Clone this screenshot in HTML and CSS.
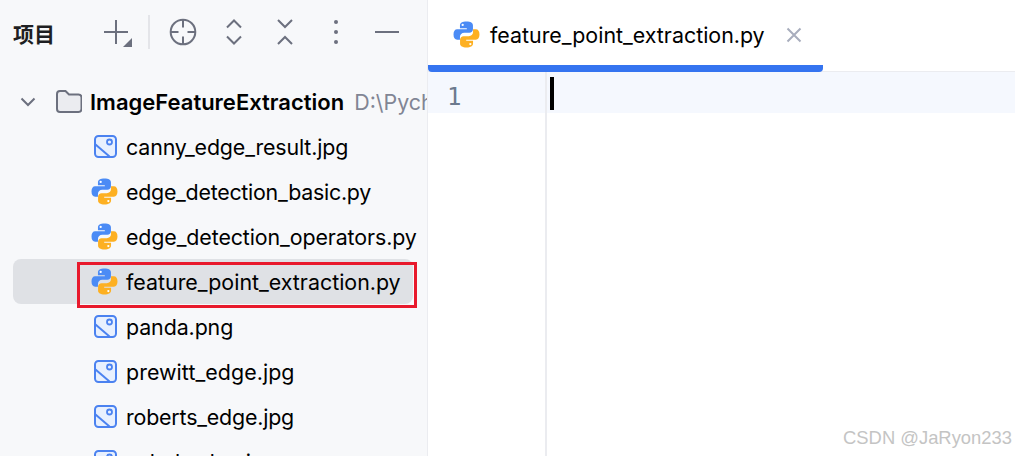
FILE: index.html
```html
<!DOCTYPE html>
<html lang="zh">
<head>
<meta charset="utf-8">
<title>feature_point_extraction.py</title>
<link rel="stylesheet" href="styles.css">
</head>
<body>
<svg class="defs" width="0" height="0" aria-hidden="true">
  <defs>
    <symbol id="py" viewBox="0 0 26 26">
      <path fill="#4b8bf5" d="M13 0.500c-4 0-6.300 1.400-6.300 3.800V7h6.600v1H4C1.800 8 0.500 10 0.500 13c0 3.100 1.300 5 3.500 5h2.700v-2.600c0-2.300 1.800-4 4.100-4h5c1.900 0 3.400-1.500 3.400-3.400V4.300C19.200 1.900 17 0.500 13 0.500z"/>
      <circle cx="9.300" cy="3.800" r="1.100" fill="#fff"/>
      <path fill="#fdb022" d="M13 25.500c4 0 6.300-1.400 6.300-3.800V19h-6.600v-1H22c2.200 0 3.500-2 3.500-5 0-3.100-1.300-5-3.500-5h-2.700v2.600c0 2.300-1.800 4-4.100 4h-5c-1.900 0-3.400 1.500-3.400 3.400v3.700c0 2.400 2.200 3.800 6.200 3.800z"/>
      <circle cx="16.700" cy="22.200" r="1.100" fill="#fff"/>
    </symbol>
    <symbol id="img" viewBox="0 0 23 23">
      <rect x="1" y="1" width="21" height="21" rx="3.500" fill="#e8f0fe" stroke="#4b82f0" stroke-width="2"/>
      <circle cx="15.500" cy="7" r="2.500" fill="none" stroke="#4b82f0" stroke-width="1.800"/>
      <path d="M1.500 9.500L15.500 21.500" fill="none" stroke="#4b82f0" stroke-width="2"/>
    </symbol>
  </defs>
</svg>
<div class="app">
  <aside class="sidebar">
    <header class="toolbar">
      <span class="title">项目</span>
      <div class="tools">
        <svg class="tool tool-add" viewBox="0 0 30 30"><path d="M13 2v24M1 14h24" class="stroke"/><path d="M29 20v9h-9z" fill="#6c707e"/></svg>
        <span class="sep"></span>
        <svg class="tool tool-target" viewBox="0 0 28 28"><circle cx="14" cy="14" r="12.300" class="stroke"/><path d="M14 1.500v8M14 18.500v8M1.500 14h8M18.500 14h8" class="stroke"/></svg>
        <svg class="tool tool-expand" viewBox="0 0 18 28"><path d="M2 9.500L9 2.500l7 7M2 18.500l7 7 7-7" class="stroke"/></svg>
        <svg class="tool tool-collapse" viewBox="0 0 18 28"><path d="M2 2l7 7 7-7M2 26l7-7 7 7" class="stroke"/></svg>
        <svg class="tool tool-more" viewBox="0 0 6 26"><circle cx="3" cy="3" r="2" fill="#6c707e"/><circle cx="3" cy="13" r="2" fill="#6c707e"/><circle cx="3" cy="23" r="2" fill="#6c707e"/></svg>
        <svg class="tool tool-min" viewBox="0 0 24 4"><path d="M0 2h24" class="stroke"/></svg>
      </div>
    </header>
    <div class="tree">
      <div class="root">
        <svg class="chevron" viewBox="0 0 16 10"><path d="M1.500 1.500L8 8l6.500-6.500" class="stroke"/></svg>
        <svg class="folder" viewBox="0 0 26 23"><path d="M1 4a3 3 0 0 1 3-3h5.500l3.500 3.500h9.500a3 3 0 0 1 3 3V19a3 3 0 0 1-3 3H4a3 3 0 0 1-3-3z" fill="#ebecf0" stroke="#6c707e" stroke-width="2"/></svg>
        <span class="root-name">ImageFeatureExtraction</span>
        <span class="root-path">D:\Pych</span>
      </div>
      <div class="row"><svg class="ico-img"><use href="#img"/></svg><span class="fit-canny">canny_edge_result.jpg</span></div>
      <div class="row"><svg class="ico-py"><use href="#py"/></svg><span class="fit-basic">edge_detection_basic.py</span></div>
      <div class="row"><svg class="ico-py"><use href="#py"/></svg><span class="fit-operators">edge_detection_operators.py</span></div>
      <div class="row selected"><svg class="ico-py"><use href="#py"/></svg><span>feature_point_extraction.py</span><div class="redbox"></div></div>
      <div class="row"><svg class="ico-img"><use href="#img"/></svg><span class="fit-panda">panda.png</span></div>
      <div class="row"><svg class="ico-img"><use href="#img"/></svg><span class="fit-prewitt">prewitt_edge.jpg</span></div>
      <div class="row"><svg class="ico-img"><use href="#img"/></svg><span class="fit-roberts">roberts_edge.jpg</span></div>
      <div class="row"><svg class="ico-img"><use href="#img"/></svg><span class="fit-roberts">sobel_edge.jpg</span></div>
    </div>
  </aside>
  <main class="editor">
    <div class="tabs">
      <div class="tab">
        <svg class="ico-py"><use href="#py"/></svg>
        <span class="tab-name">feature_point_extraction.py</span>
        <svg class="close" viewBox="0 0 16 16"><path d="M1.500 1.500l13 13M14.500 1.500l-13 13"/></svg>
      </div>
    </div>
    <div class="code">
      <div class="gutter"><div class="line-no">1</div></div>
      <div class="content"><div class="line"><span class="caret"></span></div></div>
    </div>
  </main>
</div>
<div class="watermark">CSDN @JaRyon233</div>
</body>
</html>
```
FILE: styles.css
```css
* { box-sizing: border-box; }
html, body { margin: 0; height: 100%; overflow: hidden; }
body { font-family: Inter, "Noto Sans CJK SC", sans-serif; color: #000; background: #fff; position: relative; }
.defs { position: absolute; }
.stroke { fill: none; stroke: #6c707e; stroke-width: 2; }

.app { display: flex; height: 456px; }
.sidebar { width: 428px; flex: none; background: #f7f8fa; border-right: 1px solid #ebecf0; overflow: hidden; }

.toolbar { display: flex; align-items: center; height: 66px; padding-left: 13px; }
.title { font-size: 21px; font-weight: 700; color: #1e1f22; width: 90px; }
.tools { display: flex; align-items: center; margin-top: -2px; }
.tool { display: block; flex: none; }
.tool-add { width: 30px; height: 30px; margin-top: 2px; }
.sep { width: 2px; height: 34px; background: #e4e5e9; margin: 0 19px 0 15px; }
.tool-target { width: 28px; height: 28px; }
.tool-expand { width: 18px; height: 28px; margin-left: 28px; }
.tool-collapse { width: 18px; height: 28px; margin-left: 33px; }
.tool-more { width: 6px; height: 26px; margin-left: 39px; }
.tool-min { width: 24px; height: 4px; margin-left: 36px; }

.tree { display: flex; flex-direction: column; }
.root { display: flex; align-items: center; height: 45px; margin-top: 13px; padding-left: 20px; white-space: nowrap; font-size: 22px; }
.chevron { width: 16px; height: 10px; flex: none; }
.folder { width: 26px; height: 23px; flex: none; margin-left: 20px; }
.root-name { font-weight: 600; margin-left: 8px; }
.root-path { color: #818594; margin-left: 10px; font-size: 21.4px; }
.row { position: relative; display: flex; align-items: center; height: 45px; margin-left: 13px; padding-left: 78px; font-size: 21.4px; white-space: nowrap; border-radius: 8px; }
.row.selected { background: #dfe1e5; width: 400px; }
.fit-canny { letter-spacing: -0.15px; }
.fit-basic { letter-spacing: -0.26px; }
.fit-operators { letter-spacing: -0.11px; }
.fit-panda { letter-spacing: -0.1px; }
.fit-prewitt { letter-spacing: 0.06px; }
.fit-roberts { letter-spacing: -0.19px; }
.ico-img { width: 23px; height: 23px; flex: none; margin-left: 3px; margin-right: 9px; }
.ico-py { width: 27px; height: 27px; flex: none; margin-right: 8px; }
.redbox { position: absolute; left: 64px; top: 3px; width: 340px; height: 46px; border: 3px solid #e8192c; pointer-events: none; }

.editor { flex: 1; min-width: 0; }
.tabs { height: 72px; border-bottom: 1px solid #ebecf0; }
.tab { display: flex; align-items: center; width: 395px; height: 72px; padding: 4px 22px 0 25px; position: relative; border-bottom: 7px solid #3574f0; border-radius: 0 0 4px 4px; }
.tab .ico-py { margin-right: 10px; }
.tab-name { font-size: 21.4px; }
.close { flex: none; width: 16px; height: 16px; margin-left: 21px; stroke: #a8adbd; stroke-width: 2; fill: none; }

.code { display: flex; height: 384px; }
.gutter { width: 119px; border-right: 2px solid #ebecf0; flex: none; }
.line-no { height: 41px; background: #f5f8fe; padding-left: 19px; font-size: 24px; line-height: 50px; color: #6c7a8e; font-family: "DejaVu Sans Mono", monospace; }
.content { flex: 1; }
.line { height: 41px; background: #f5f8fe; padding: 5px 0 0 3px; }
.caret { display: block; width: 4px; height: 33px; background: #000; }

.watermark { position: absolute; right: 3px; bottom: 7px; font-family: "Liberation Sans", sans-serif; font-size: 18.4px; color: #c4c4c4; }
```
